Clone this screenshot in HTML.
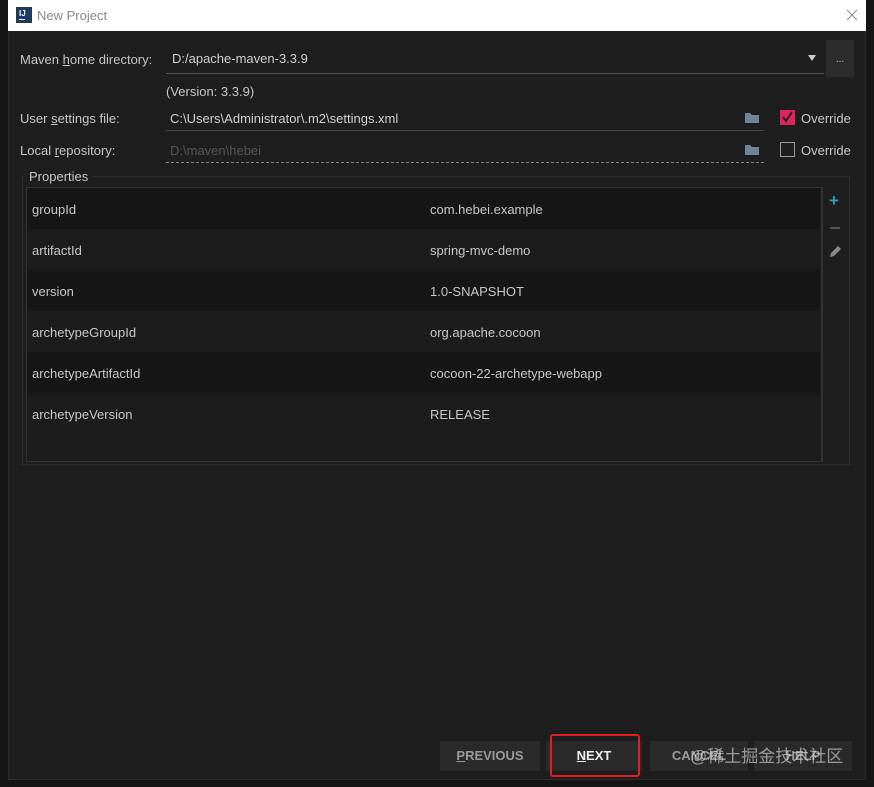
<!DOCTYPE html>
<html><head><style>
*{margin:0;padding:0;box-sizing:border-box}
body{width:874px;height:787px;background:#151515;font-family:"Liberation Sans","Noto Sans CJK SC",sans-serif;font-size:13px;color:#c8c8c8;position:relative;overflow:hidden}
.a{position:absolute}
#title{left:8px;top:0;width:858px;height:31px;background:#fff;color:#888;font-size:13px}
#dlg{left:8px;top:31px;width:858px;height:749px;background:#1e1e1e;border:1px solid #2c2c2c;border-top:none}
u{text-decoration:underline}
.lbl{color:#c6c6c6}
.row{position:absolute;left:28px;width:792px;height:41px}
.row span{position:absolute;top:14px}
.btn{position:absolute;top:741px;height:30px;background:#2a2a2a;color:#9a9a9a;font-weight:bold;font-size:13px;text-align:center;line-height:30px}
</style></head><body>
<div class="a" id="title">
 <div class="a" style="left:8px;top:7px;width:16px;height:16px;background:#1b3a6b;border:1px solid #333"><div class="a" style="left:2px;top:1px;color:#fff;font-size:8px;font-weight:bold">IJ</div><div class="a" style="left:2px;top:11px;width:6px;height:1px;background:#fff"></div></div>
 <div class="a" style="left:29px;top:8px">New Project</div>
 <svg class="a" style="left:838px;top:9px" width="12" height="12"><path d="M1 1l10 10M11 1L1 11" stroke="#888" stroke-width="1"/></svg>
</div>
<div class="a" id="dlg"></div>
<div class="a lbl" style="left:20px;top:52px">Maven <u>h</u>ome directory:</div>
<div class="a" style="left:172px;top:51px;color:#d0d0d0">D:/apache-maven-3.3.9</div>
<div class="a" style="left:166px;top:73px;width:658px;height:1px;background:#555"></div>
<div class="a" style="left:808px;top:55px;width:0;height:0;border-left:4px solid transparent;border-right:4px solid transparent;border-top:6px solid #ccc"></div>
<div class="a" style="left:826px;top:40px;width:28px;height:37px;background:#2c2c2c;border-radius:2px;color:#ccc;text-align:center;line-height:40px;font-size:10px">...</div>
<div class="a" style="left:166px;top:84px">(Version: 3.3.9)</div>
<div class="a lbl" style="left:20px;top:111px">User <u>s</u>ettings file:</div>
<div class="a" style="left:170px;top:111px;color:#d0d0d0">C:\Users\Administrator\.m2\settings.xml</div>
<div class="a" style="left:166px;top:130px;width:598px;height:1px;background:#444"></div>
<div class="a lbl" style="left:20px;top:143px">Local <u>r</u>epository:</div>
<div class="a" style="left:170px;top:143px;color:#555">D:\maven\hebei</div>
<div class="a" style="left:166px;top:162px;width:598px;border-top:1px dashed #888"></div>
<svg class="a" style="left:744px;top:112px" width="16" height="12"><path d="M1 1h5l2 2h7v8H1z" fill="#6e8595"/></svg>
<svg class="a" style="left:744px;top:144px" width="16" height="12"><path d="M1 1h5l2 2h7v8H1z" fill="#6e8595"/></svg>
<div class="a" style="left:780px;top:110px;width:15px;height:15px;background:#e0245e"></div>
<svg class="a" style="left:780px;top:110px" width="15" height="15"><path d="M3 7l3 4 6-9" stroke="#222" stroke-width="2" fill="none"/></svg>
<div class="a" style="left:801px;top:111px">Override</div>
<div class="a" style="left:780px;top:142px;width:15px;height:15px;border:1px solid #999"></div>
<div class="a" style="left:801px;top:143px">Override</div>
<div class="a" style="left:22px;top:176px;width:828px;height:289px;border:1px solid #2e2e2e"></div>
<div class="a" style="left:26px;top:187px;width:796px;height:275px;border:1px solid #333;background:#1c1c1c"></div>
<div class="a" style="left:24px;top:169px;padding:0 5px;background:#1e1e1e">Properties</div>
<div class="row" style="top:188px;background:#161616"><span style="left:4px">groupId</span><span style="left:402px">com.hebei.example</span></div>
<div class="row" style="top:229px;background:#1c1c1c"><span style="left:4px">artifactId</span><span style="left:402px">spring-mvc-demo</span></div>
<div class="row" style="top:270px;background:#161616"><span style="left:4px">version</span><span style="left:402px">1.0-SNAPSHOT</span></div>
<div class="row" style="top:311px;background:#1c1c1c"><span style="left:4px">archetypeGroupId</span><span style="left:402px">org.apache.cocoon</span></div>
<div class="row" style="top:352px;background:#161616"><span style="left:4px">archetypeArtifactId</span><span style="left:402px">cocoon-22-archetype-webapp</span></div>
<div class="row" style="top:393px;background:#1c1c1c"><span style="left:4px">archetypeVersion</span><span style="left:402px">RELEASE</span></div>
<div class="a" style="left:822px;top:187px;width:26px;height:275px;background:#1e1e1e;border-left:1px solid #333"></div>
<div class="a" style="left:829px;top:191px;color:#2aa0b8;font-size:17px;font-weight:bold">+</div>
<div class="a" style="left:830px;top:227px;width:10px;height:2px;background:#555"></div>
<svg class="a" style="left:828px;top:245px" width="14" height="14"><path d="M2 12l1-4 7-7 3 3-7 7z" fill="#888"/></svg>
<div class="btn" style="left:440px;width:100px"><u>P</u>REVIOUS</div>
<div class="btn" style="left:546px;width:96px;color:#eee"><u>N</u>EXT</div>
<div class="btn" style="left:650px;width:98px">CANCEL</div>
<div class="btn" style="left:754px;width:98px">HELP</div>
<div class="a" style="left:550px;top:734px;width:90px;height:43px;border:2px solid #e02020;border-radius:3px"></div>
<div class="a" style="left:690px;top:742px;color:rgba(230,230,230,0.6);font-size:17px">@稀土掘金技术社区</div>
</body></html>
